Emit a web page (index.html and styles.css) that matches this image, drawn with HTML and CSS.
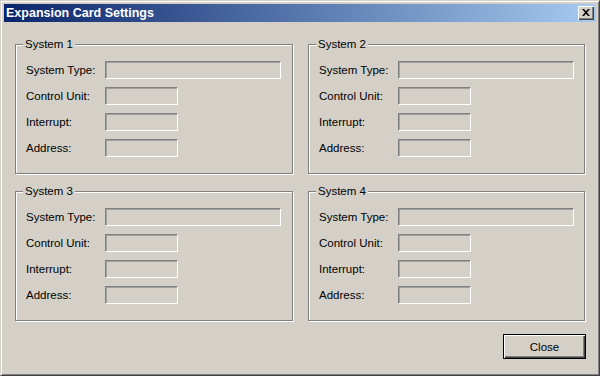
FILE: index.html
```html
<!DOCTYPE html>
<html lang="en">
<head>
    <meta charset="UTF-8">
    <title>Expansion Card Settings</title>
    <link rel="stylesheet" href="styles.css">
</head>
<body>
    <div class="window">
        <div class="titlebar">
            <span class="title">Expansion Card Settings</span>
            <button class="close-x" aria-label="Close">
                <svg width="8" height="7" viewBox="0 0 8 7">
                    <path d="M0 0h2l2 2.2L6 0h2L5 3.5 8 7H6L4 4.8 2 7H0l3-3.5z" fill="#000"/>
                </svg>
            </button>
        </div>

        <div class="content">
            <div class="groups">
                <!-- System 1 -->
                <fieldset class="group">
                    <legend>System 1</legend>
                    <div class="row"><label>System Type:</label><input class="field wide" type="text" disabled></div>
                    <div class="row"><label>Control Unit:</label><input class="field" type="text" disabled></div>
                    <div class="row"><label>Interrupt:</label><input class="field" type="text" disabled></div>
                    <div class="row"><label>Address:</label><input class="field" type="text" disabled></div>
                </fieldset>

                <!-- System 2 -->
                <fieldset class="group">
                    <legend>System 2</legend>
                    <div class="row"><label>System Type:</label><input class="field wide" type="text" disabled></div>
                    <div class="row"><label>Control Unit:</label><input class="field" type="text" disabled></div>
                    <div class="row"><label>Interrupt:</label><input class="field" type="text" disabled></div>
                    <div class="row"><label>Address:</label><input class="field" type="text" disabled></div>
                </fieldset>

                <!-- System 3 -->
                <fieldset class="group">
                    <legend>System 3</legend>
                    <div class="row"><label>System Type:</label><input class="field wide" type="text" disabled></div>
                    <div class="row"><label>Control Unit:</label><input class="field" type="text" disabled></div>
                    <div class="row"><label>Interrupt:</label><input class="field" type="text" disabled></div>
                    <div class="row"><label>Address:</label><input class="field" type="text" disabled></div>
                </fieldset>

                <!-- System 4 -->
                <fieldset class="group">
                    <legend>System 4</legend>
                    <div class="row"><label>System Type:</label><input class="field wide" type="text" disabled></div>
                    <div class="row"><label>Control Unit:</label><input class="field" type="text" disabled></div>
                    <div class="row"><label>Interrupt:</label><input class="field" type="text" disabled></div>
                    <div class="row"><label>Address:</label><input class="field" type="text" disabled></div>
                </fieldset>
            </div>

            <div class="actions">
                <button class="btn default">Close</button>
            </div>
        </div>
    </div>
</body>
</html>
```

FILE: styles.css
```css
/* Reset */
body, fieldset, legend, button, input, label {
    margin: 0;
    padding: 0;
}

body {
    background-color: #d4d0c8;
    font-family: "Liberation Sans", Arial, sans-serif;
    font-size: 11.5px;
    color: #000;
}

/* Window frame */
.window {
    width: 600px;
    height: 376px;
    box-sizing: border-box;
    border: 1px solid;
    border-color: #d4d0c8 #404040 #404040 #d4d0c8;
    box-shadow: inset 1px 1px 0 #fff, inset -1px -1px 0 #808080;
    padding: 3px;
    display: flex;
    flex-direction: column;
}

/* Title bar */
.titlebar {
    height: 18px;
    background: linear-gradient(to right, #0a246a, #a6caf0);
    display: flex;
    justify-content: space-between;
    align-items: center;
    padding: 0 2px 0 2px;
}

.title {
    color: #fff;
    font-weight: bold;
    font-size: 12.5px;
}

.close-x {
    width: 16px;
    height: 14px;
    background-color: #d4d0c8;
    border: none;
    box-shadow: inset 1px 1px 0 #fff, inset -1px -1px 0 #404040, inset -2px -2px 0 #808080;
    display: flex;
    align-items: center;
    justify-content: center;
    padding: 0 0 1px 0;
}

/* Content */
.content {
    flex: 1;
    padding: 16px 10px 0 11px;
    display: flex;
    flex-direction: column;
}

.groups {
    display: grid;
    grid-template-columns: 278px 277px;
    column-gap: 15px;
    row-gap: 11px;
}

.group {
    border: 1px solid #808080;
    box-shadow: inset 1px 1px 0 #fff, 1px 1px 0 #fff;
    padding: 10px 0 16px 10px;
    display: flex;
    flex-direction: column;
    gap: 8px;
}

.group legend {
    margin-left: -3px;
    padding: 0 2px;
    background-color: #d4d0c8;
    line-height: 13px;
}

.row {
    display: flex;
    align-items: center;
}

.row label {
    width: 79px;
}

.field {
    width: 73px;
    height: 18px;
    box-sizing: border-box;
    background-color: #d4d0c8;
    border: 1px solid;
    border-color: #808080 #fff #fff #808080;
    box-shadow: inset 1px 1px 0 #a0a0a0;
}

.field.wide {
    width: 176px;
}

/* Buttons */
.actions {
    display: flex;
    justify-content: flex-end;
    margin-top: 13px;
}

.btn {
    width: 83px;
    height: 25px;
    background-color: #d4d0c8;
    font-family: "Liberation Sans", Arial, sans-serif;
    font-size: 11.5px;
    color: #000;
    border: 1px solid #404040;
    box-shadow: inset 1px 1px 0 #fff, inset -1px -1px 0 #808080;
}

.btn.default {
    border-color: #000;
    box-shadow: inset 1px 1px 0 #fff, inset -1px -1px 0 #404040, inset -2px -2px 0 #808080;
}
```
